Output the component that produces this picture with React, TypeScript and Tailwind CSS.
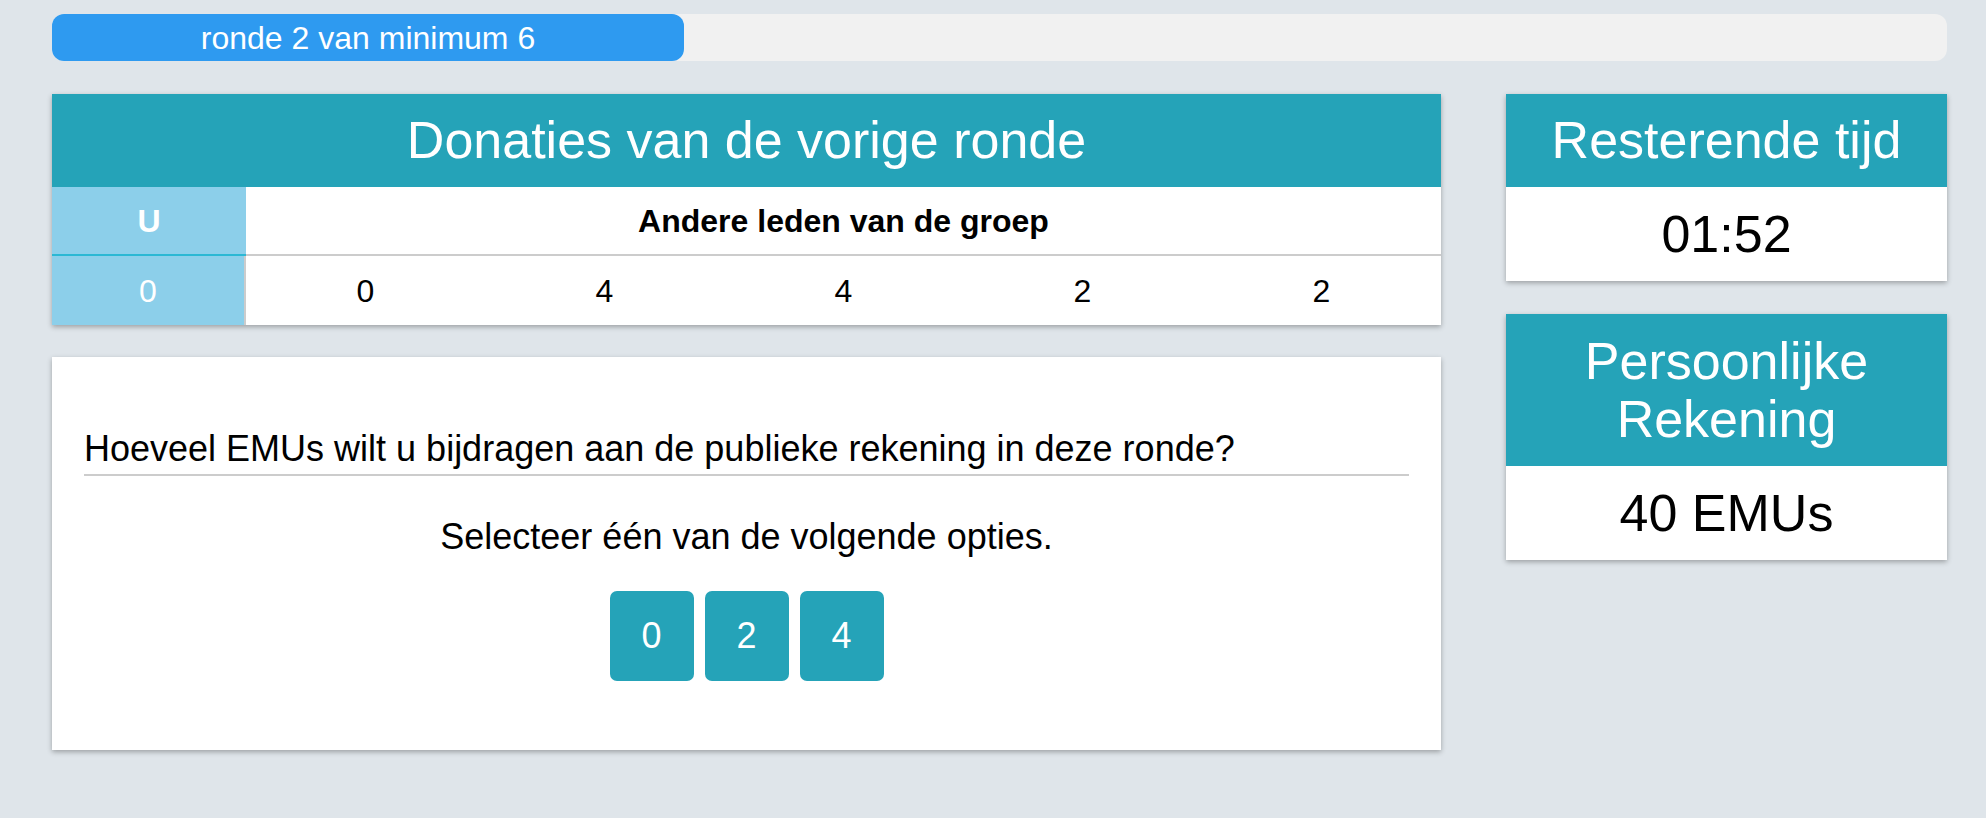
import React from 'react';

export default function App() {
  const others = [0, 4, 4, 2, 2];
  const options = [0, 2, 4];

  return (
    <div
      className="min-h-screen bg-[#dfe5ea] pl-[52px] pr-[39px] pt-[14px] pb-10 text-black"
      style={{ fontFamily: '"Liberation Sans", Arial, Helvetica, sans-serif' }}
    >
      {/* Progress */}
      <div className="h-[47px] w-full rounded-[12px] bg-[#f1f1f1]">
        <div className="flex h-full w-[632px] items-center justify-center rounded-[12px] bg-[#2e9af0] text-[32px] text-white">
          ronde 2 van minimum 6
        </div>
      </div>

      <div className="mt-[33px] flex gap-[65px]">
        {/* Left column */}
        <div className="flex w-[1389px] flex-col gap-[32px]">
          {/* Donations table */}
          <div className="bg-white shadow-[0_2px_5px_rgba(0,0,0,0.3)]">
            <div className="bg-[#25a3b8] py-[18px] text-center text-[52px] leading-[57px] text-white">
              Donaties van de vorige ronde
            </div>
            <div className="flex h-[69px] border-b-2 border-[#cccccc]">
              <div className="-mb-[2px] flex w-[194px] items-center justify-center border-b-2 border-[#2bb8d4] bg-[#8ccfea] text-[32px] font-bold text-white">
                U
              </div>
              <div className="flex flex-1 items-center justify-center text-[32px] font-bold">
                Andere leden van de groep
              </div>
            </div>
            <div className="flex h-[69px]">
              <div className="flex w-[194px] items-center justify-center border-r-2 border-[#cccccc] bg-[#8ccfea] text-[32px] text-white">
                0
              </div>
              <div className="grid flex-1 grid-cols-5">
                {others.map((v, i) => (
                  <div key={i} className="flex items-center justify-center text-[32px]">
                    {v}
                  </div>
                ))}
              </div>
            </div>
          </div>

          {/* Question */}
          <div className="bg-white px-[32px] pt-[70px] pb-[69px] shadow-[0_2px_5px_rgba(0,0,0,0.3)]">
            <div className="border-b-2 border-[#cccccc] pb-[4px] text-[36px] leading-[43px]">
              Hoeveel EMUs wilt u bijdragen aan de publieke rekening in deze ronde?
            </div>
            <div className="mt-[39px] text-center text-[36px] leading-[43px]">
              Selecteer één van de volgende opties.
            </div>
            <div className="mt-[33px] flex justify-center gap-[11px]">
              {options.map((o) => (
                <button
                  key={o}
                  className="flex h-[90px] w-[84px] items-center justify-center rounded-[7px] bg-[#25a3b8] text-[36px] text-white"
                >
                  {o}
                </button>
              ))}
            </div>
          </div>
        </div>

        {/* Right column */}
        <div className="flex w-[441px] flex-col gap-[33px]">
          <div className="bg-white shadow-[0_2px_5px_rgba(0,0,0,0.3)]">
            <div className="bg-[#25a3b8] py-[18px] text-center text-[52px] leading-[57px] text-white">
              Resterende tijd
            </div>
            <div className="flex h-[94px] items-center justify-center text-[52px]">01:52</div>
          </div>
          <div className="bg-white shadow-[0_2px_5px_rgba(0,0,0,0.3)]">
            <div className="bg-[#25a3b8] py-[18px] text-center text-[52px] leading-[58px] text-white">
              Persoonlijke
              <br />
              Rekening
            </div>
            <div className="flex h-[94px] items-center justify-center text-[52px]">40 EMUs</div>
          </div>
        </div>
      </div>
    </div>
  );
}
